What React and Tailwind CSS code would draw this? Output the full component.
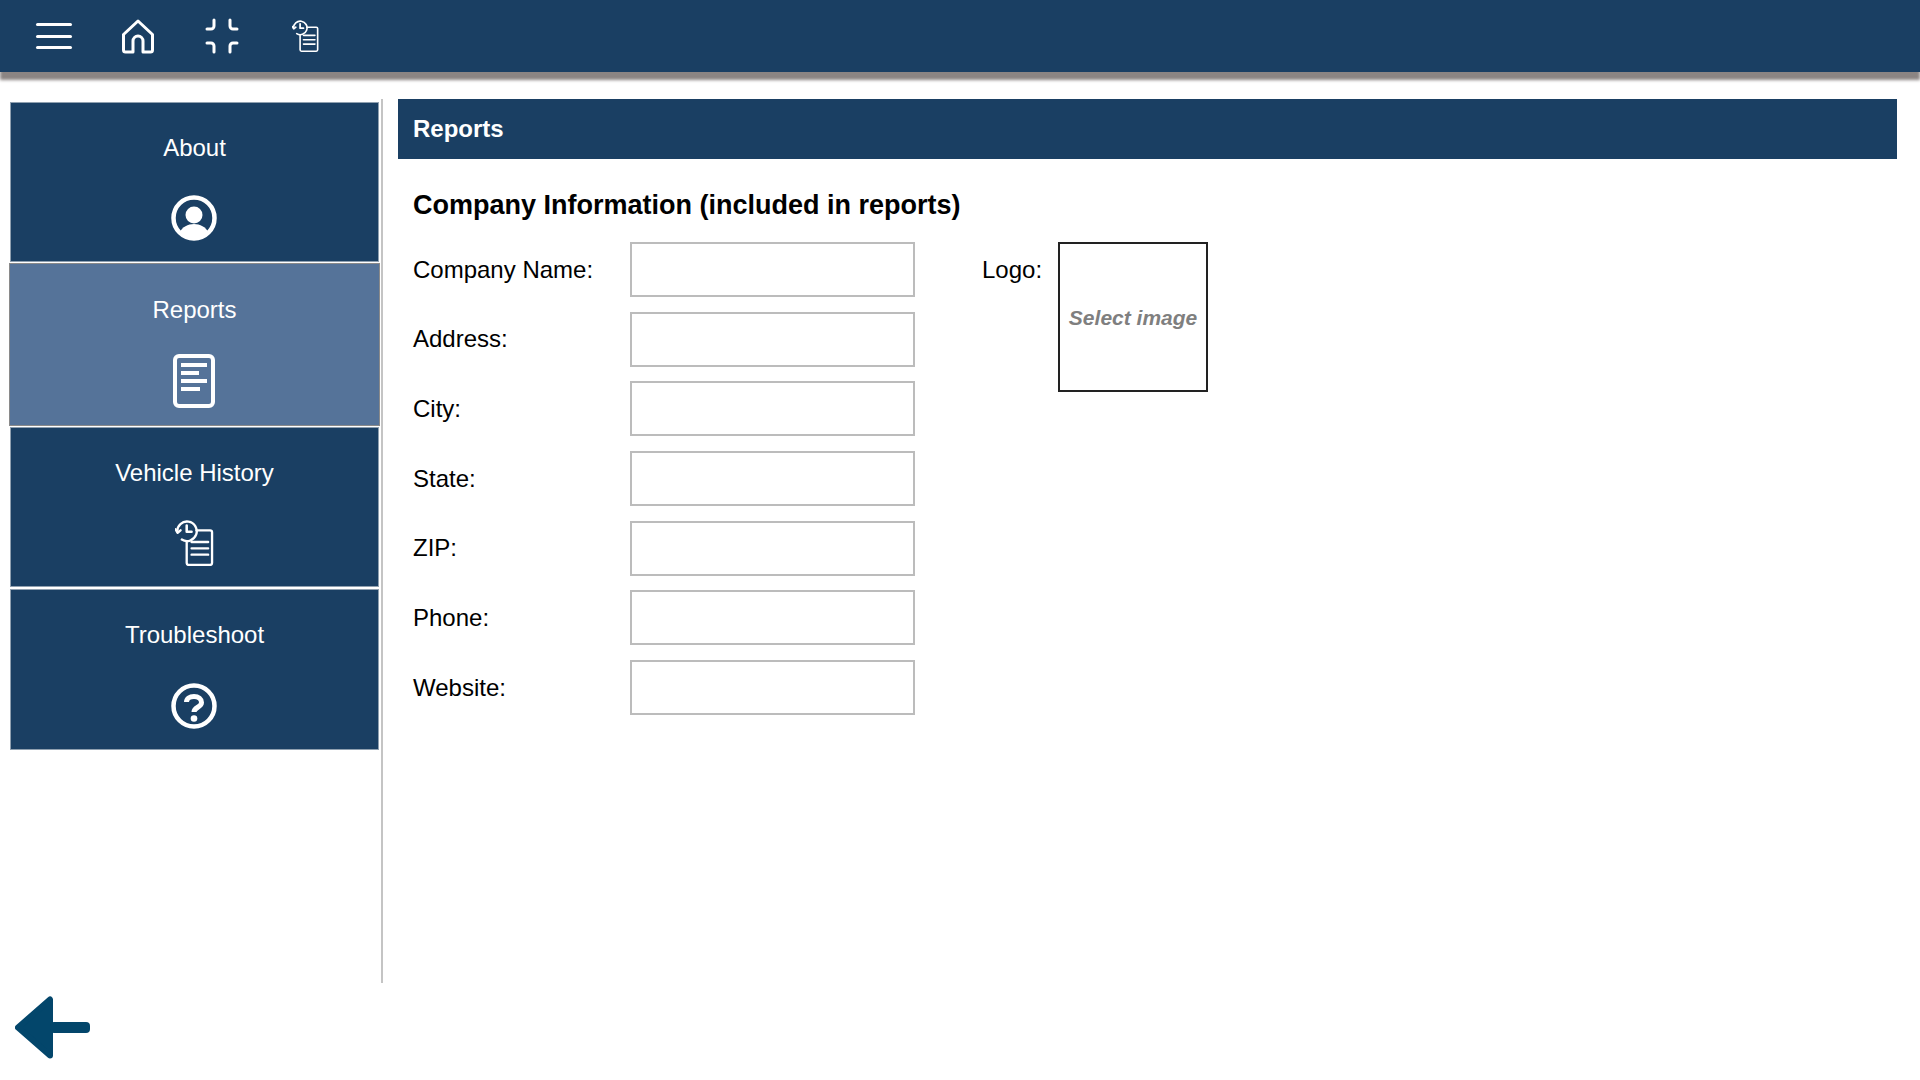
const TopIcon = ({ children, className }) => (
  <svg viewBox="0 0 40 40" fill="none" stroke="white" strokeWidth="3" strokeLinecap="round" strokeLinejoin="round" className={className}>
    {children}
  </svg>
);

const HistoryDoc = ({ className }) => (
  <svg viewBox="0 0 40 47" fill="none" stroke="white" strokeWidth="2.400" strokeLinecap="round" strokeLinejoin="round" className={className}>
    <path d="M22 10.500h14a2 2 0 0 1 2 2V44a2 2 0 0 1-2 2H14a2 2 0 0 1-2-2V22" />
    <path d="M17 22.500h17M17 29h17M17 35.500h17" />
    <path d="M2.300 12A10 10 0 1 1 7 20" />
    <path d="M0.500 9.500l2.200 3.500 3-2.500" />
    <path d="M12 5.500v6.500h5" strokeWidth="2.600" />
  </svg>
);

const AboutIcon = () => (
  <svg viewBox="0 0 46 46" className="h-[46px] w-[46px]">
    <circle cx="23" cy="23" r="20.500" fill="none" stroke="white" strokeWidth="4.500" />
    <circle cx="23" cy="20" r="8.500" fill="white" />
    <path d="M9 37c2-5 8-8 14-8s12 3 14 8c-4 5-9 8-14 8s-10-3-14-8z" fill="white" />
  </svg>
);

const ReportIcon = () => (
  <svg viewBox="0 0 42 54" fill="none" className="h-[54px] w-[42px]">
    <rect x="2" y="2" width="38" height="50" rx="4" stroke="white" strokeWidth="4" />
    <path d="M8 11h26M8 19h18M8 27h26M8 35h19" stroke="white" strokeWidth="4" />
  </svg>
);

const HelpIcon = () => (
  <svg viewBox="0 0 46 46" className="mt-[2px] h-[46px] w-[46px]">
    <circle cx="23" cy="23" r="20.500" fill="none" stroke="white" strokeWidth="4.500" />
    <path d="M15.500 19c0-3.500 3-5.500 7.500-5.500s7.500 2.500 7.500 6c0 5-7.500 4.500-7.500 9.500" fill="none" stroke="white" strokeWidth="5" />
    <circle cx="23" cy="35.500" r="3.300" fill="white" />
  </svg>
);

const navItems = [
  { label: 'About', icon: <AboutIcon />, box: 'mb-[1px] h-[160px]' },
  { label: 'Reports', icon: <ReportIcon />, box: 'mb-[1px] h-[163px]', active: true },
  { label: 'Vehicle History', icon: <HistoryDoc className="h-[46px] w-[39px]" />, box: 'mb-[2px] h-[160px]' },
  { label: 'Troubleshoot', icon: <HelpIcon />, box: 'h-[161px]' },
];

const fields = ['Company Name', 'Address', 'City', 'State', 'ZIP', 'Phone', 'Website'];

const App = () => {
  return (
    <div className="flex h-screen flex-col overflow-hidden bg-white font-['Liberation_Sans',Arial,sans-serif] text-black">
      <header className="flex h-[72px] shrink-0 items-center bg-[#1a3f63] pl-[36px] shadow-[0_8px_3px_#8b8583]">
        <button className="flex w-[36px] flex-col gap-[8.500px]">
          <span className="h-[3px] rounded-full bg-white" />
          <span className="h-[3px] rounded-full bg-white" />
          <span className="h-[3px] rounded-full bg-white" />
        </button>
        <TopIcon className="ml-[46px] h-[40px] w-[40px]">
          <path d="M15 36H7.500a2 2 0 0 1-2-2V18.500L20 5l14.500 13.500V34a2 2 0 0 1-2 2H25V25a5 5 0 0 0-10 0z" />
        </TopIcon>
        <TopIcon className="ml-[44px] h-[40px] w-[40px]">
          <path d="M12 4v6a3 3 0 0 1-3 3H5M28 4v6a3 3 0 0 0 3 3h4M12 36v-6a3 3 0 0 0-3-3H5M28 36v-6a3 3 0 0 1 3-3h4" />
        </TopIcon>
        <HistoryDoc className="ml-[50px] h-[32px] w-[27px]" />
      </header>

      <main className="flex h-[911px] shrink-0 pt-[27px]">
        <nav className="w-[383px] shrink-0 border-r-2 border-[#c4c4c4] pl-[9px] pt-[3px]">
          {navItems.map((item) => (
            <button
              key={item.label}
              className={
                item.active
                  ? `flex w-[371px] flex-col items-center border border-[#8a8a8a] bg-[#557399] pt-[32px] text-white ${item.box}`
                  : `mx-[1px] flex w-[369px] flex-col items-center border border-[#8fa0b0] bg-[#1a3f63] pt-[31px] text-white ${item.box}`
              }
            >
              <span className="h-[28px] text-[24px] leading-[28px]">{item.label}</span>
              <span className={item.active ? 'mr-[1px] mt-[30px] flex h-[54px] items-center' : 'mr-[1px] mt-[29px] flex h-[54px] items-center'}>{item.icon}</span>
            </button>
          ))}
        </nav>

        <section className="ml-[15px] mr-[23px] flex-1">
          <h1 className="flex h-[60px] items-center bg-[#1a3f63] pl-[15px] text-[24px] font-bold text-white">Reports</h1>
          <h2 className="ml-[15px] mt-[30px] text-[27px] font-bold leading-[33px]">Company Information (included in reports)</h2>
          <div className="ml-[15px] mt-[20px] flex">
            <div className="grid w-[502px] grid-cols-[217px_285px] gap-y-[14.700px]">
              {fields.map((field) => (
                <label key={field} className="contents">
                  <span className="flex h-[55px] items-center text-[24px]">{field}:</span>
                  <input type="text" className="h-[55px] w-[285px] border-2 border-[#bcbcbc] bg-white" />
                </label>
              ))}
            </div>
            <div className="ml-[67px] flex">
              <span className="flex h-[55px] items-center text-[24px]">Logo:</span>
              <button className="ml-[16px] flex h-[150px] w-[150px] items-center justify-center border-2 border-[#222] pt-[2px] text-[21px] font-bold italic text-[#7f7f7f]">
                Select image
              </button>
            </div>
          </div>
        </section>
      </main>

      <footer className="pl-[15px] pt-[13px]">
        <svg viewBox="0 0 75 63" className="h-[63px] w-[75px]">
          <path d="M3 31.500L35 3.500V59.500z" fill="#03466b" stroke="#03466b" strokeWidth="6" strokeLinejoin="round" />
          <rect x="35" y="26" width="40" height="11" rx="4" fill="#03466b" />
        </svg>
      </footer>
    </div>
  );
};

export default App;
